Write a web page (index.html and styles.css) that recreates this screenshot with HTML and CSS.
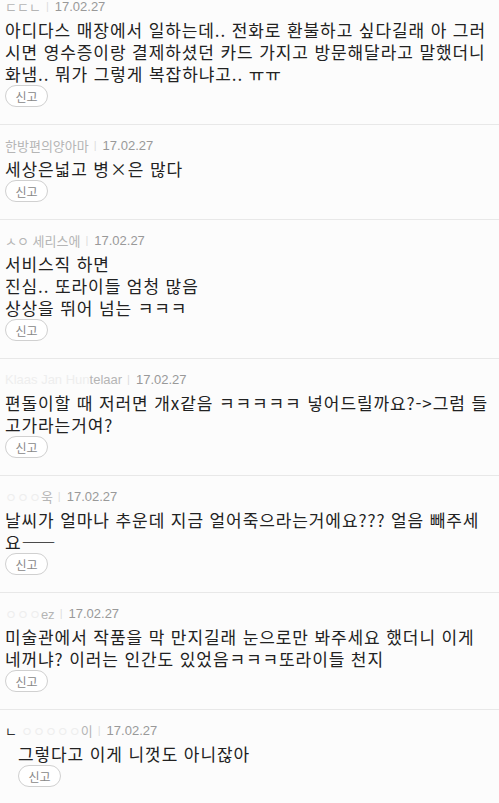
FILE: index.html
```html
<!DOCTYPE html>
<html lang="ko">
<head>
    <meta charset="UTF-8">
    <meta name="viewport" content="width=device-width, initial-scale=1.0">
    <title>댓글</title>
    <link rel="stylesheet" href="styles.css">
</head>
<body>
    <ul class="comment-list">
        <li class="comment">
            <div class="meta"><span class="nick">ㄷㄷㄴ</span><span class="bar">|</span><span class="date">17.02.27</span></div>
            <p class="text">아디다스 매장에서 일하는데.. 전화로 환불하고 싶다길래 아 그러시면 영수증이랑 결제하셨던 카드 가지고 방문해달라고 말했더니 화냄.. 뭐가 그렇게 복잡하냐고.. ㅠㅠ</p>
            <button class="report">신고</button>
        </li>
        <li class="comment">
            <div class="meta"><span class="nick">한방편의양아마</span><span class="bar">|</span><span class="date">17.02.27</span></div>
            <p class="text">세상은넓고 병×은 많다</p>
            <button class="report">신고</button>
        </li>
        <li class="comment">
            <div class="meta"><span class="nick">ㅅㅇ 세리스에</span><span class="bar">|</span><span class="date">17.02.27</span></div>
            <p class="text">서비스직 하면
진심.. 또라이들 엄청 많음
상상을 뛰어 넘는 ㅋㅋㅋ</p>
            <button class="report">신고</button>
        </li>
        <li class="comment">
            <div class="meta"><span class="nick"><span class="blur">Klaas Jan Hun</span>telaar</span><span class="bar">|</span><span class="date">17.02.27</span></div>
            <p class="text">편돌이할 때 저러면 개x같음 ㅋㅋㅋㅋㅋ 넣어드릴까요?-&gt;그럼 들고가라는거여?</p>
            <button class="report">신고</button>
        </li>
        <li class="comment">
            <div class="meta"><span class="nick"><span class="blur">ㅇㅇㅇ</span>욱</span><span class="bar">|</span><span class="date">17.02.27</span></div>
            <p class="text">날씨가 얼마나 추운데 지금 얼어죽으라는거에요??? 얼음 빼주세요——</p>
            <button class="report">신고</button>
        </li>
        <li class="comment">
            <div class="meta"><span class="nick"><span class="blur">ㅇㅇㅇ</span>ez</span><span class="bar">|</span><span class="date">17.02.27</span></div>
            <p class="text">미술관에서 작품을 막 만지길래 눈으로만 봐주세요 했더니 이게 네꺼냐? 이러는 인간도 있었음ㅋㅋㅋ또라이들 천지</p>
            <button class="report">신고</button>
        </li>
        <li class="comment reply">
            <div class="meta"><span class="reply-mark">ㄴ</span><span class="nick"><span class="blur">ㅇㅇㅇㅇㅇ</span>이</span><span class="bar">|</span><span class="date">17.02.27</span></div>
            <p class="text">그렇다고 이게 니껏도 아니잖아</p>
            <button class="report">신고</button>
        </li>
    </ul>
</body>
</html>
```

FILE: styles.css
```css
body {
    margin: 0;
    background-color: #fcfcfc;
    font-family: "Noto Sans CJK KR", "Liberation Sans", sans-serif;
    color: #333;
}

.comment-list {
    list-style: none;
    margin: -14px 0 0;
    padding: 0;
}

.comment {
    padding: 11px 8px 17px 5px;
    border-bottom: 1px solid #e8e8e8;
}

.meta {
    display: flex;
    align-items: center;
    height: 18px;
    font-family: "Liberation Sans", "Noto Sans CJK KR", sans-serif;
    font-size: 13px;
    color: #aaa;
}

.nick {
    color: #b5b5b5;
}

.blur {
    color: #eee;
}

.bar {
    margin: 0 6px 0 5px;
    color: #ddd;
    font-size: 11px;
}

.date {
    color: #999;
}

/* keeps the line breaks the user typed */
.text {
    margin: 4px 0 0;
    font-size: 17px;
    line-height: 22px;
    letter-spacing: 0.9px;
    color: #222;
    white-space: pre-line;
}

.report {
    display: block;
    margin: 0;
    width: 43px;
    height: 22px;
    padding: 0;
    border: 1px solid #d0d0d0;
    border-radius: 11px;
    background-color: #fff;
    font-family: "Noto Sans CJK KR", sans-serif;
    font-size: 12px;
    color: #888;
}

.reply {
    padding-left: 5px;
}

.reply-mark {
    margin-right: 4px;
    color: #333;
}

.reply .text,
.reply .report {
    margin-left: 13px;
}
```
